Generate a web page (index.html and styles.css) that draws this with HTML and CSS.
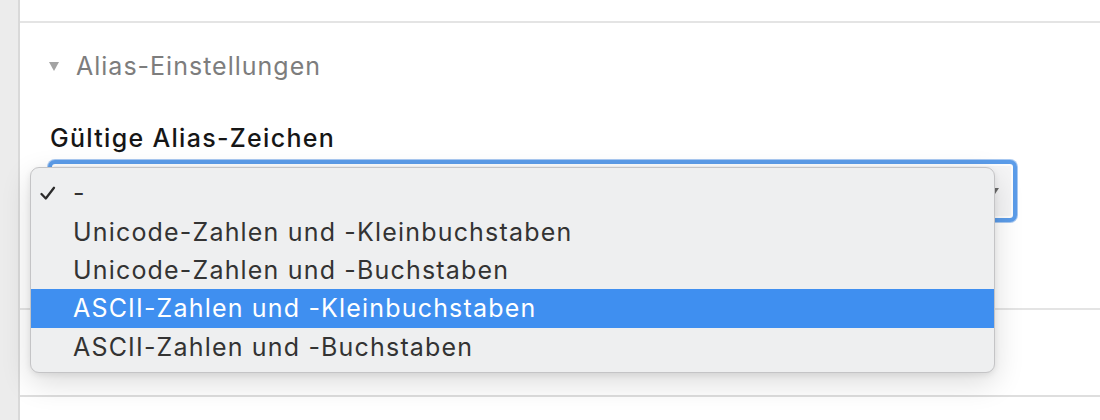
FILE: index.html
```html
<!DOCTYPE html>
<html lang="de">
<head>
<meta charset="utf-8">
<link rel="stylesheet" href="styles.css">
</head>
<body>
<div class="sidebar"></div>
<div class="main">
  <div class="top-block"></div>
  <div class="section">
    <div class="summary">
      <span class="disclosure"></span>
      <span class="summary-text">Alias-Einstellungen</span>
    </div>
    <div class="field-label">Gültige Alias-Zeichen</div>
    <div class="select">
      <span class="select-arrow"></span>
    </div>
  </div>
  <div class="section-empty"></div>
  <div class="bottom-block"></div>

  <div class="menu">
    <div class="menu-item checked">
      <svg class="check" width="16" height="15" viewBox="0 0 16 15"><polyline points="1.5,8 5.8,12.5 14,1.8" fill="none" stroke="#2b2b2b" stroke-width="2.3" stroke-linecap="round" stroke-linejoin="round"/></svg>
      <span class="item-text">-</span>
    </div>
    <div class="menu-item"><span class="item-text">Unicode-Zahlen und -Kleinbuchstaben</span></div>
    <div class="menu-item"><span class="item-text">Unicode-Zahlen und -Buchstaben</span></div>
    <div class="menu-item active"><span class="item-text">ASCII-Zahlen und -Kleinbuchstaben</span></div>
    <div class="menu-item"><span class="item-text">ASCII-Zahlen und -Buchstaben</span></div>
  </div>
</div>
</body>
</html>
```

FILE: styles.css
```css
* { box-sizing: border-box; }
html, body { margin: 0; padding: 0; }
body {
  width: 1100px;
  height: 420px;
  overflow: hidden;
  display: flex;
  background: #fff;
  font-family: Inter, "Noto Sans", "Liberation Sans", sans-serif;
}
.sidebar {
  width: 20px;
  flex: none;
  background: #ececec;
  border-right: 2px solid #d9d9d9;
}
.main {
  flex: 1;
  position: relative;
  display: flex;
  flex-direction: column;
}
.top-block {
  height: 23px;
  border-bottom: 2px solid #e4e4e4;
}
.section {
  height: 287px;
  border-bottom: 2px solid #e4e4e4;
  padding: 28px 83px 0 28px;
}
.summary {
  display: flex;
  align-items: center;
  height: 30px;
}
.disclosure {
  width: 0;
  height: 0;
  margin-left: 1px;
  border-left: 5.5px solid transparent;
  border-right: 5.5px solid transparent;
  border-top: 9px solid #a3a3a3;
}
.summary-text {
  margin-left: 17px;
  font-size: 25px;
  color: #7d7d7d;
  letter-spacing: 1px;
}
.field-label {
  margin-top: 42px;
  margin-left: 2px;
  font-size: 25px;
  font-weight: 500;
  color: #161616;
  height: 30px;
  line-height: 30px;
  letter-spacing: 1.3px;
}
.select {
  margin-top: 7px;
  height: 62px;
  border: 4px solid #5b9ce9;
  border-radius: 7px;
  background: #f5f5f6;
  box-shadow: 0 0 0 1px #a9c9f1, inset 0 0 0 2px #fdfdfd;
  position: relative;
  display: flex;
  align-items: center;
  justify-content: flex-end;
  padding-right: 14px;
}
.select-arrow {
  width: 0;
  height: 0;
  border-left: 4px solid transparent;
  border-right: 4px solid transparent;
  border-top: 6px solid #6a6a6a;
}
.section-empty {
  height: 87px;
  border-bottom: 2px solid #dedede;
}
.bottom-block {
  flex: 1;
  background: #fff;
}
.menu {
  position: absolute;
  left: 10px;
  top: 167px;
  width: 965px;
  height: 206px;
  padding: 6px 0 8px;
  background: #eeeff0;
  border: 1px solid #c4c4c6;
  border-radius: 9px;
  box-shadow: 0 10px 30px rgba(0, 0, 0, 0.14), 0 2px 6px rgba(0, 0, 0, 0.08);
  overflow: hidden;
}
.menu-item {
  height: 38.4px;
  display: flex;
  align-items: center;
  padding-left: 42px;
  position: relative;
  font-size: 25px;
  color: #333;
  letter-spacing: 1.18px;
}
.menu-item.active {
  background: #3f8ff0;
  color: #fff;
}
.check {
  position: absolute;
  left: 9px;
  top: 12px;
}
```
